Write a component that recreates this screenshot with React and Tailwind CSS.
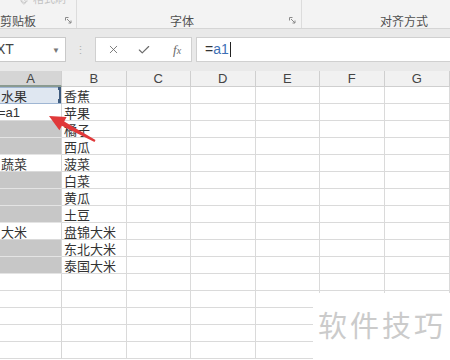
import React from 'react';
import { X, Check, Paintbrush } from 'lucide-react';

const cjk = { fontFamily: '"Noto Sans CJK SC", "Noto Sans", sans-serif' };

const rows = [
  { a: '水果', b: '香蕉', sel: true },
  { a: '=a1', b: '苹果', edit: true },
  { gray: true, b: '橘子' },
  { gray: true, b: '西瓜' },
  { a: '蔬菜', b: '菠菜' },
  { gray: true, b: '白菜' },
  { gray: true, b: '黄瓜' },
  { gray: true, b: '土豆' },
  { a: '大米', b: '盘锦大米' },
  { gray: true, b: '东北大米' },
  { gray: true, b: '泰国大米' },
  {}, {}, {}, {}, {},
];

const cols = ['A', 'B', 'C', 'D', 'E', 'F', 'G'];
const gridCols = 'grid grid-cols-[62px_64.5px_64.5px_64.5px_64.5px_64.5px_1fr]';

const Launcher = () => (
  <svg width="7" height="7" viewBox="0 0 7 7" className="text-[#8a8a8a]">
    <path d="M0.5 0.5h3M0.5 0.5v3M2 2l4 4M6 3.5V6H3.5" stroke="currentColor" strokeWidth="1" fill="none" />
  </svg>
);

const Ribbon = () => (
  <div className="flex h-[29px] bg-[#f3f3f3] border-b border-[#d5d5d5] text-[12px] text-[#505050]" style={cjk}>
    <div className="w-[77px] flex flex-col border-r border-[#dcdcdc]">
      <div className="h-[10px] flex items-start gap-[4px] pl-[20px] overflow-hidden opacity-30">
        <Paintbrush size={9} className="-mt-[4px]" />
        <span className="leading-none -mt-[7px] text-[11px]">格式刷</span>
      </div>
      <div className="flex-1 flex items-center justify-between pr-[4px] pt-[3px]">
        <span className="leading-none">剪贴板</span>
        <Launcher />
      </div>
    </div>
    <div className="w-[225px] flex flex-col border-r border-[#dcdcdc]">
      <div className="h-[10px]" />
      <div className="flex-1 flex items-center justify-between pl-[93px] pr-[5px] pt-[3px]">
        <span className="leading-none">字体</span>
        <Launcher />
      </div>
    </div>
    <div className="flex-1 flex flex-col">
      <div className="h-[10px]" />
      <div className="flex-1 flex items-center pl-[78px] pt-[3px]">
        <span className="leading-none">对齐方式</span>
      </div>
    </div>
  </div>
);

const FormulaBar = () => (
  <div className="bg-[#e9e9e9] pt-[8px] pb-[9px]">
    <div className="flex h-[25px] items-stretch">
      <div className="w-[66px] bg-white border border-l-0 border-[#c9c9c9] flex items-center justify-between pr-[5px] overflow-hidden">
        <span className="-ml-[4px] text-[14px] text-[#444]" style={{ fontFamily: '"Liberation Sans", sans-serif' }}>XT</span>
        <span className="text-[8px] text-[#777]">▼</span>
      </div>
      <div className="w-[29px] flex items-center justify-center text-[#b0b0b0] text-[11px] leading-none">⋮</div>
      <div className="w-[97px] bg-white border border-[#d0d0d0] flex items-center text-[#6a6a6a]">
        <X size={13} strokeWidth={1.6} className="ml-[11px]" />
        <Check size={14} strokeWidth={2} className="ml-[17px]" />
        <span className="ml-[22px] italic text-[13px]" style={{ fontFamily: '"Liberation Serif", serif' }}>f<span className="text-[10px]">x</span></span>
      </div>
      <div className="flex-1 ml-[4px] bg-white border border-r-0 border-[#d0d0d0] flex items-center pl-[8px] text-[14px]" style={{ fontFamily: '"Liberation Sans", sans-serif' }}>
        <span className="text-[#333]">=</span>
        <span className="text-[#3d6fb5]">a1</span>
        <span className="w-px h-[15px] bg-[#222] ml-[1px]" />
      </div>
    </div>
  </div>
);

const Header = () => (
  <div className={`${gridCols} h-[16px] text-[13px] text-[#444]`} style={{ fontFamily: '"Liberation Sans", sans-serif' }}>
    {cols.map((c, i) => (
      <div
        key={c}
        className={`flex items-center justify-center leading-none border-r border-[#cfcfcf] ${
          i === 0 ? 'bg-[#d5d5d5] border-b-2 border-b-[#8a9a90]' : 'bg-[#f1f1f1] border-b border-b-[#cfcfcf]'
        }`}
      >
        {c}
      </div>
    ))}
  </div>
);

const Row = ({ r }) => (
  <div className={`${gridCols} h-[17px] text-[13px] text-[#333]`} style={cjk}>
    <div
      className={`relative flex items-center overflow-hidden whitespace-nowrap leading-none border-r border-[#d6d6d6] ${
        r.gray ? 'bg-[#c7c7c7] border-b border-b-[#e4e4e4]' : r.sel ? 'bg-[#dfe7f1] border-b border-b-[#9fb6d3]' : 'bg-white border-b border-b-[#dadada]'
      }`}
    >
      {r.a && (
        <span className={r.edit ? '-ml-[2px]' : 'ml-[1px]'} style={r.edit ? { fontFamily: '"Liberation Sans", sans-serif' } : undefined}>
          {r.a}
        </span>
      )}
      {r.sel && (
        <>
          <div className="absolute inset-0 border-t border-[#9fb6d3]" />
          <div className="absolute right-0 top-[1px] bottom-0 w-[2px] bg-[#3e5b7e]" />
          <div className="absolute right-0 top-0 w-[3px] h-[3px] bg-[#3e5b7e]" />
          <div className="absolute right-0 bottom-0 w-[3px] h-[4px] bg-[#3e5b7e]" />
        </>
      )}
    </div>
    <div className="flex items-center pl-[2px] leading-none whitespace-nowrap overflow-hidden border-r border-b border-[#dadada]">{r.b}</div>
    {cols.slice(2).map((c) => (
      <div key={c} className="border-r border-b border-[#dadada]" />
    ))}
  </div>
);

export default function App() {
  return (
    <div className="relative w-[450px] h-[360px] overflow-hidden bg-white">
      <Ribbon />
      <FormulaBar />
      <Header />
      <div className="flex flex-col">
        {rows.map((r, i) => (
          <Row key={i} r={r} />
        ))}
      </div>

      <svg className="absolute left-0 top-0 pointer-events-none" width="450" height="360" viewBox="0 0 450 360">
        <polygon
          points="49,116 66.6,117 64.2,121.4 95.5,140.1 94.5,141.9 61.8,125.8 59.4,130.2"
          fill="#e0393a"
        />
      </svg>

      <div className="absolute left-[313px] top-[293px] right-0 bottom-0 bg-white flex items-start pl-[5px] pt-[17px]">
        <span className="text-[29px] leading-none tracking-[3px] text-[#cbcbcb]" style={cjk}>软件技巧</span>
      </div>
    </div>
  );
}
